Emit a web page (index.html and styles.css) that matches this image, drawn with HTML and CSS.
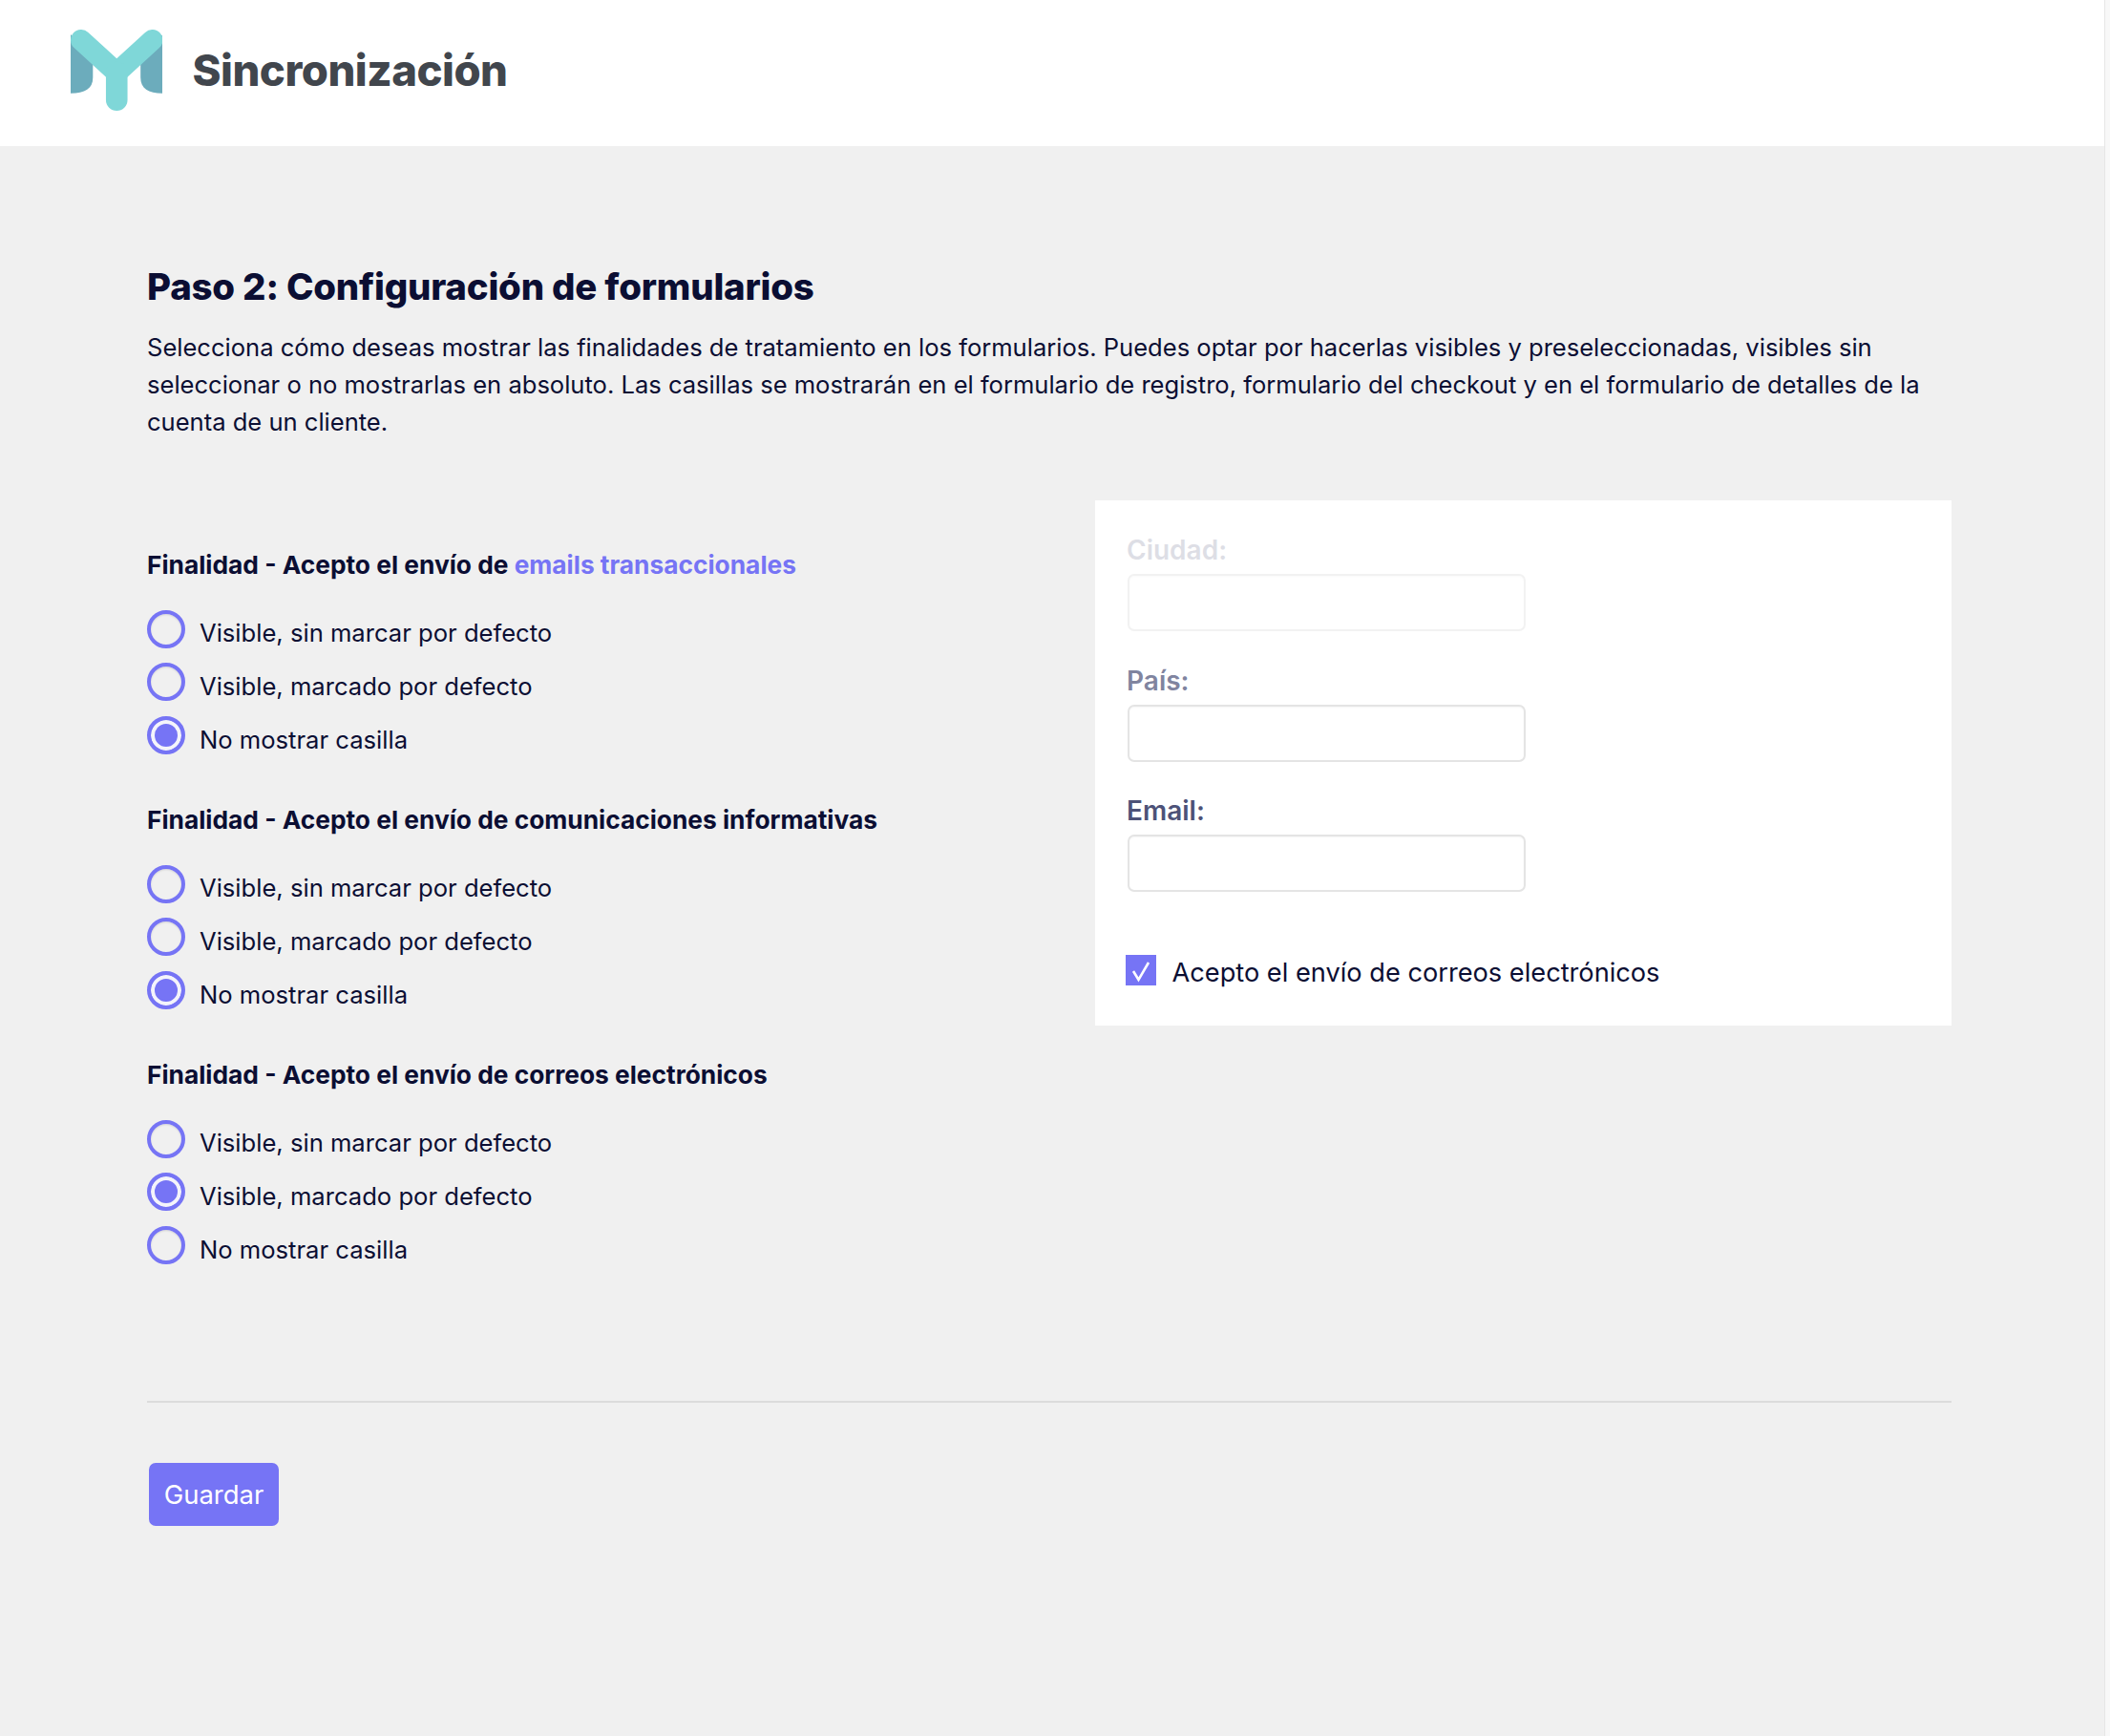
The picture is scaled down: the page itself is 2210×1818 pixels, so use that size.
FILE: index.html
```html
<!DOCTYPE html>
<html lang="es">
<head>
<meta charset="utf-8">
<title>Sincronización</title>
<link rel="stylesheet" href="styles.css">
</head>
<body>
<div class="page">
  <div class="app">
    <header class="topbar">
      <svg class="logo" viewBox="0 0 96.5 85" width="96.5" height="85" aria-hidden="true">
        <path fill="#6cacbc" d="M0 5 L23.3 30 V50 C23.3 62 15 66.7 0 66.7 Z"/>
        <path fill="#6cacbc" d="M96.5 5 L73.2 30 V50 C73.2 62 81.5 66.7 96.5 66.7 Z"/>
        <path fill="none" stroke="#7fd7d8" stroke-width="22" stroke-linecap="round" stroke-linejoin="miter" d="M11 11 L48.25 45 L85.5 11"/>
        <path fill="none" stroke="#7fd7d8" stroke-width="22.6" stroke-linecap="round" d="M48.25 45 V73.7"/>
      </svg>
      <h1 class="brand">Sincronización</h1>
    </header>
    <main class="content">
      <h2 class="title">Paso 2: Configuración de formularios</h2>
      <p class="intro">Selecciona cómo deseas mostrar las finalidades de tratamiento en los formularios. Puedes optar por hacerlas visibles y preseleccionadas, visibles sin seleccionar o no mostrarlas en absoluto. Las casillas se mostrarán en el formulario de registro, formulario del checkout y en el formulario de detalles de la cuenta de un cliente.</p>
      <div class="columns">
        <div class="options">
          <section class="group">
            <h3 class="group-title">Finalidad - Acepto el envío de <span class="accent">emails transaccionales</span></h3>
            <ul class="radios">
              <li class="radio"><span class="dot"></span>Visible, sin marcar por defecto</li>
              <li class="radio"><span class="dot"></span>Visible, marcado por defecto</li>
              <li class="radio"><span class="dot on"></span>No mostrar casilla</li>
            </ul>
          </section>
          <section class="group">
            <h3 class="group-title">Finalidad - Acepto el envío de comunicaciones informativas</h3>
            <ul class="radios">
              <li class="radio"><span class="dot"></span>Visible, sin marcar por defecto</li>
              <li class="radio"><span class="dot"></span>Visible, marcado por defecto</li>
              <li class="radio"><span class="dot on"></span>No mostrar casilla</li>
            </ul>
          </section>
          <section class="group">
            <h3 class="group-title">Finalidad - Acepto el envío de correos electrónicos</h3>
            <ul class="radios">
              <li class="radio"><span class="dot"></span>Visible, sin marcar por defecto</li>
              <li class="radio"><span class="dot on"></span>Visible, marcado por defecto</li>
              <li class="radio"><span class="dot"></span>No mostrar casilla</li>
            </ul>
          </section>
        </div>
        <aside class="preview">
          <div class="field faint">
            <div class="field-label">Ciudad:</div>
            <div class="field-input"></div>
          </div>
          <div class="field mid">
            <div class="field-label">País:</div>
            <div class="field-input"></div>
          </div>
          <div class="field strong">
            <div class="field-label">Email:</div>
            <div class="field-input"></div>
          </div>
          <div class="consent">
            <svg class="check" viewBox="0 0 32 32" width="32" height="32" aria-hidden="true">
              <rect width="32" height="32" fill="#7674f5"/>
              <path d="M8 17 L13.5 26 L24 8" fill="none" stroke="#fff" stroke-width="2.6"/>
            </svg>
            <span>Acepto el envío de correos electrónicos</span>
          </div>
        </aside>
      </div>
      <hr class="rule">
      <button class="save" type="button">Guardar</button>
    </main>
  </div>
  <div class="scrollbar"></div>
</div>
</body>
</html>
```
FILE: styles.css
```css
html, body {
  margin: 0;
  padding: 0;
  height: 100%;
  overflow: hidden;
}
body {
  font-family: Inter, "Liberation Sans", sans-serif;
  background: #f0f0f0;
  color: #0b0e33;
}
.page {
  display: flex;
  height: 1818px;
}
.app {
  flex: 1;
  min-width: 0;
}
.scrollbar {
  width: 5px;
  background: #f8f8f8;
  border-left: 1px solid #e6e6e6;
}
.topbar {
  height: 153px;
  background: #fff;
  display: flex;
  align-items: flex-start;
  padding-left: 73.5px;
  box-sizing: border-box;
}
.logo {
  margin-top: 31px;
  flex: none;
}
.brand {
  margin: 46px 0 0 31.5px;
  font-size: 45.5px;
  line-height: 56px;
  font-weight: 800;
  letter-spacing: -0.5px;
  color: #41464d;
}
.content {
  padding: 121px 160px 0 154px;
}
.title {
  margin: 0;
  font-size: 38.4px;
  line-height: 52px;
  font-weight: 800;
  letter-spacing: -0.2px;
  color: #0b0e33;
}
.intro {
  margin: 18px 0 0;
  font-size: 25.56px;
  line-height: 39px;
  color: #0b0e33;
}
.columns {
  display: flex;
  justify-content: space-between;
  align-items: flex-start;
  margin-top: 63px;
}
.options {
  padding: 49px 0 93px;
}
.group {
  margin-bottom: 38px;
}
.group-title {
  margin: 0;
  font-size: 26.32px;
  line-height: 38px;
  font-weight: 700;
  color: #0b0e33;
}
.accent {
  color: #7674f5;
}
.radios {
  list-style: none;
  margin: 24px 0 0;
  padding: 0;
}
.radio {
  display: flex;
  align-items: center;
  height: 55.67px;
  font-size: 25.6px;
  color: #0b0e33;
}
.dot {
  box-sizing: border-box;
  width: 40px;
  height: 40px;
  border-radius: 50%;
  border: 4px solid #7674f5;
  margin: -8px 15px 0 0;
  flex: none;
  box-shadow: inset 0 1px 2px rgba(0, 0, 0, 0.12);
}
.dot.on {
  background: #7674f5;
  box-shadow: inset 0 0 0 4px #f4f4fb;
}
.preview {
  box-sizing: border-box;
  width: 897px;
  height: 550px;
  background: #fff;
  padding: 33px 33px 0;
}
.field {
  margin-bottom: 32.5px;
}
.field-label {
  font-size: 28px;
  line-height: 38px;
  font-weight: 600;
}
.field-input {
  box-sizing: border-box;
  margin: 6px 0 0 1px;
  width: 417px;
  height: 60px;
  background: #fff;
  border: 2px solid #e4e4e4;
  border-radius: 7px;
  box-shadow: inset 0 1px 2px rgba(0, 0, 0, 0.04);
}
.faint { opacity: 0.45; }
.faint .field-label { color: #6e7191; opacity: .5; }
.mid .field-label { color: #80849f; }
.strong .field-label { color: #4d5278; }
.consent {
  display: flex;
  align-items: center;
  margin: 65.5px 0 0 -1px;
  font-size: 27.2px;
  color: #0b0e33;
}
.check {
  margin: 0 16.5px 5px 0;
  flex: none;
}
.rule {
  border: 0;
  height: 2px;
  background: #dcdcdc;
  margin: 0;
}
.save {
  display: block;
  margin: 63px 0 0 2px;
  width: 136px;
  height: 66px;
  border: 0;
  border-radius: 7px;
  background: #7674f5;
  color: #fff;
  font-family: inherit;
  font-size: 27.5px;
}
```
